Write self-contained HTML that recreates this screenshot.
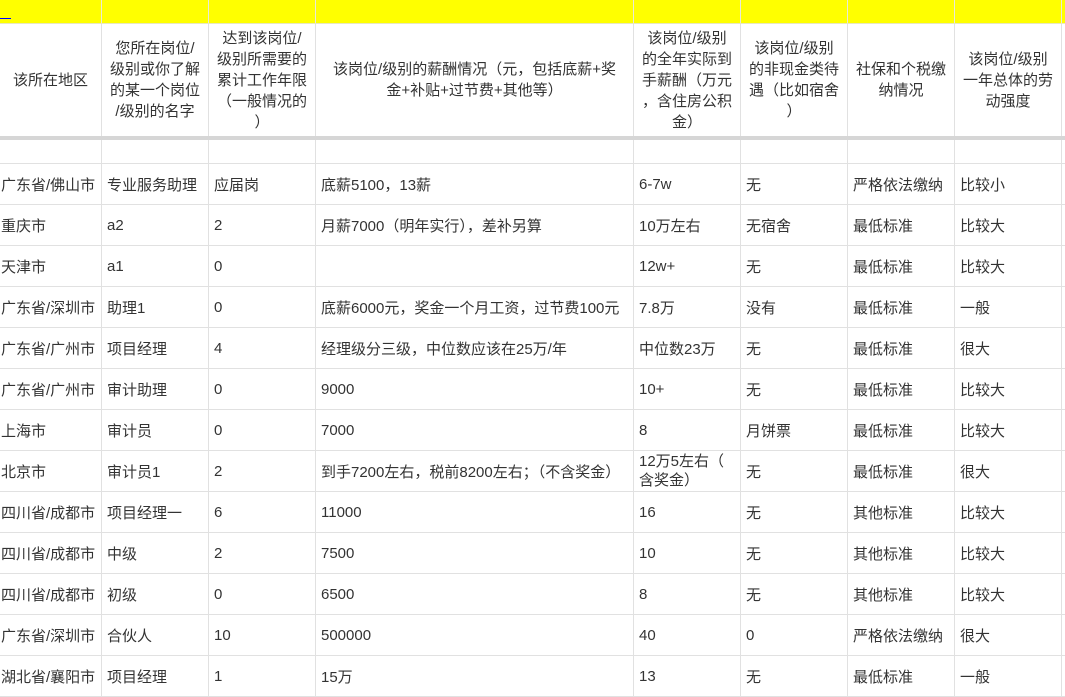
<!DOCTYPE html>
<html><head><meta charset="utf-8"><style>
*{box-sizing:border-box;margin:0;padding:0}
body{width:1065px;height:697px;overflow:hidden;background:#fff;font-family:"Liberation Sans","Noto Sans CJK SC",sans-serif;font-size:15px;color:#333}
.row{display:grid;grid-template-columns:102px 107px 107px 318px 107px 107px 107px 107px 10px;border-bottom:1px solid #e1e1e1}
.row>div{border-right:1px solid #e1e1e1;display:flex;align-items:center;padding-left:5px;white-space:nowrap;overflow:hidden}
.row>div:first-child{padding-left:1px}
.y{height:24px;background:#ffff00;border-bottom:1px solid #e8e8c0}
.y>div{border-right:1px solid #e8e8d8}
.h{height:116px;border-bottom:4px solid #d6d6d6}
.h>div{justify-content:center;text-align:center;line-height:21px;padding:0!important}
.e{height:24px}
.d{height:41px}
</style></head><body>
<div class="row y"><div style="position:relative"><span style="position:absolute;left:0;top:18px;width:11px;border-bottom:1px solid #00f"></span></div><div></div><div></div><div></div><div></div><div></div><div></div><div></div><div></div></div>
<div class="row h"><div>该所在地区</div><div>您所在岗位/<br>级别或你了解<br>的某一个岗位<br>/级别的名字</div><div>达到该岗位/<br>级别所需要的<br>累计工作年限<br>（一般情况的<br>）</div><div>该岗位/级别的薪酬情况（元，包括底薪+奖<br>金+补贴+过节费+其他等）</div><div>该岗位/级别<br>的全年实际到<br>手薪酬（万元<br>，含住房公积<br>金）</div><div>该岗位/级别<br>的非现金类待<br>遇（比如宿舍<br>）</div><div>社保和个税缴<br>纳情况</div><div>该岗位/级别<br>一年总体的劳<br>动强度</div><div></div></div>
<div class="row e"><div></div><div></div><div></div><div></div><div></div><div></div><div></div><div></div><div></div></div>
<div class="row d"><div>广东省/佛山市</div><div>专业服务助理</div><div>应届岗</div><div>底薪5100，13薪</div><div>6-7w</div><div>无</div><div>严格依法缴纳</div><div>比较小</div><div></div></div>
<div class="row d"><div>重庆市</div><div>a2</div><div>2</div><div>月薪7000（明年实行），差补另算</div><div>10万左右</div><div>无宿舍</div><div>最低标准</div><div>比较大</div><div></div></div>
<div class="row d"><div>天津市</div><div>a1</div><div>0</div><div></div><div>12w+</div><div>无</div><div>最低标准</div><div>比较大</div><div></div></div>
<div class="row d"><div>广东省/深圳市</div><div>助理1</div><div>0</div><div>底薪6000元，奖金一个月工资，过节费100元</div><div>7.8万</div><div>没有</div><div>最低标准</div><div>一般</div><div></div></div>
<div class="row d"><div>广东省/广州市</div><div>项目经理</div><div>4</div><div>经理级分三级，中位数应该在25万/年</div><div>中位数23万</div><div>无</div><div>最低标准</div><div>很大</div><div></div></div>
<div class="row d"><div>广东省/广州市</div><div>审计助理</div><div>0</div><div>9000</div><div>10+</div><div>无</div><div>最低标准</div><div>比较大</div><div></div></div>
<div class="row d"><div>上海市</div><div>审计员</div><div>0</div><div>7000</div><div>8</div><div>月饼票</div><div>最低标准</div><div>比较大</div><div></div></div>
<div class="row d"><div>北京市</div><div>审计员1</div><div>2</div><div>到手7200左右，税前8200左右；（不含奖金）</div><div style="line-height:19px">12万5左右（<br>含奖金）</div><div>无</div><div>最低标准</div><div>很大</div><div></div></div>
<div class="row d"><div>四川省/成都市</div><div>项目经理一</div><div>6</div><div>11000</div><div>16</div><div>无</div><div>其他标准</div><div>比较大</div><div></div></div>
<div class="row d"><div>四川省/成都市</div><div>中级</div><div>2</div><div>7500</div><div>10</div><div>无</div><div>其他标准</div><div>比较大</div><div></div></div>
<div class="row d"><div>四川省/成都市</div><div>初级</div><div>0</div><div>6500</div><div>8</div><div>无</div><div>其他标准</div><div>比较大</div><div></div></div>
<div class="row d"><div>广东省/深圳市</div><div>合伙人</div><div>10</div><div>500000</div><div>40</div><div>0</div><div>严格依法缴纳</div><div>很大</div><div></div></div>
<div class="row d"><div>湖北省/襄阳市</div><div>项目经理</div><div>1</div><div>15万</div><div>13</div><div>无</div><div>最低标准</div><div>一般</div><div></div></div>
</body></html>
